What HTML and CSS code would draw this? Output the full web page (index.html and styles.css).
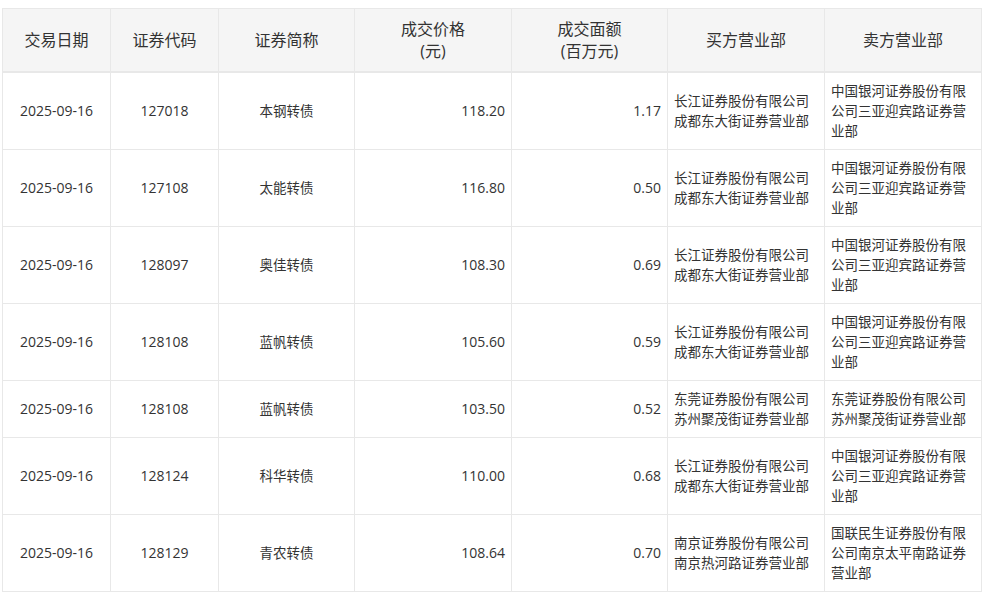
FILE: index.html
```html
<!DOCTYPE html>
<html lang="zh-CN">
<head>
<meta charset="utf-8">
<link rel="stylesheet" href="styles.css">
</head>
<body>
<table class="trades">
<colgroup>
<col class="c-date"><col class="c-code"><col class="c-name"><col class="c-price"><col class="c-amt"><col class="c-buy"><col class="c-sell">
</colgroup>
<thead>
<tr>
<th>交易日期</th><th>证券代码</th><th>证券简称</th><th>成交价格<br>(元)</th><th>成交面额<br>(百万元)</th><th>买方营业部</th><th>卖方营业部</th>
</tr>
</thead>
<tbody>
<tr><td>2025-09-16</td><td>127018</td><td class="cjk">本钢转债</td><td class="num">118.20</td><td class="num">1.17</td><td class="org">长江证券股份有限公司成都东大街证券营业部</td><td class="org">中国银河证券股份有限公司三亚迎宾路证券营业部</td></tr>
<tr><td>2025-09-16</td><td>127108</td><td class="cjk">太能转债</td><td class="num">116.80</td><td class="num">0.50</td><td class="org">长江证券股份有限公司成都东大街证券营业部</td><td class="org">中国银河证券股份有限公司三亚迎宾路证券营业部</td></tr>
<tr><td>2025-09-16</td><td>128097</td><td class="cjk">奥佳转债</td><td class="num">108.30</td><td class="num">0.69</td><td class="org">长江证券股份有限公司成都东大街证券营业部</td><td class="org">中国银河证券股份有限公司三亚迎宾路证券营业部</td></tr>
<tr><td>2025-09-16</td><td>128108</td><td class="cjk">蓝帆转债</td><td class="num">105.60</td><td class="num">0.59</td><td class="org">长江证券股份有限公司成都东大街证券营业部</td><td class="org">中国银河证券股份有限公司三亚迎宾路证券营业部</td></tr>
<tr><td>2025-09-16</td><td>128108</td><td class="cjk">蓝帆转债</td><td class="num">103.50</td><td class="num">0.52</td><td class="org">东莞证券股份有限公司苏州聚茂街证券营业部</td><td class="org">东莞证券股份有限公司苏州聚茂街证券营业部</td></tr>
<tr><td>2025-09-16</td><td>128124</td><td class="cjk">科华转债</td><td class="num">110.00</td><td class="num">0.68</td><td class="org">长江证券股份有限公司成都东大街证券营业部</td><td class="org">中国银河证券股份有限公司三亚迎宾路证券营业部</td></tr>
<tr><td>2025-09-16</td><td>128129</td><td class="cjk">青农转债</td><td class="num">108.64</td><td class="num">0.70</td><td class="org">南京证券股份有限公司南京热河路证券营业部</td><td class="org">国联民生证券股份有限公司南京太平南路证券营业部</td></tr>
</tbody>
</table>
</body>
</html>
```
FILE: styles.css
```css
html, body {
  margin: 0;
  padding: 0;
  background: #ffffff;
}
body {
  padding: 8px 0 0 2px;
  font-family: "Open Sans", "Noto Sans CJK SC", sans-serif;
  color: #333333;
}
.trades {
  border-collapse: collapse;
  table-layout: fixed;
  width: 980px;
  border: 1px solid #e8e8e8;
}
.c-date { width: 108px; }
.c-code { width: 108px; }
.c-name { width: 136px; }
.c-price { width: 157px; }
.c-amt { width: 156px; }
.c-buy { width: 157px; }
.c-sell { width: 157px; }
.trades th {
  background: #f5f5f5;
  font-weight: normal;
  font-size: 16px;
  line-height: 22px;
  padding: 9px 6px;
  border: 1px solid #e8e8e8;
  border-bottom: 2px solid #e8e8e8;
  text-align: center;
  color: #333333;
}
.trades td {
  font-size: 14px;
  line-height: 20px;
  padding: 8px 6px;
  border: 1px solid #e8e8e8;
  text-align: center;
  vertical-align: middle;
}
.trades td.cjk {
  font-size: 13.5px;
}
.trades td.num {
  text-align: right;
}
.trades td.org {
  text-align: left;
  font-size: 13.5px;
}
```
